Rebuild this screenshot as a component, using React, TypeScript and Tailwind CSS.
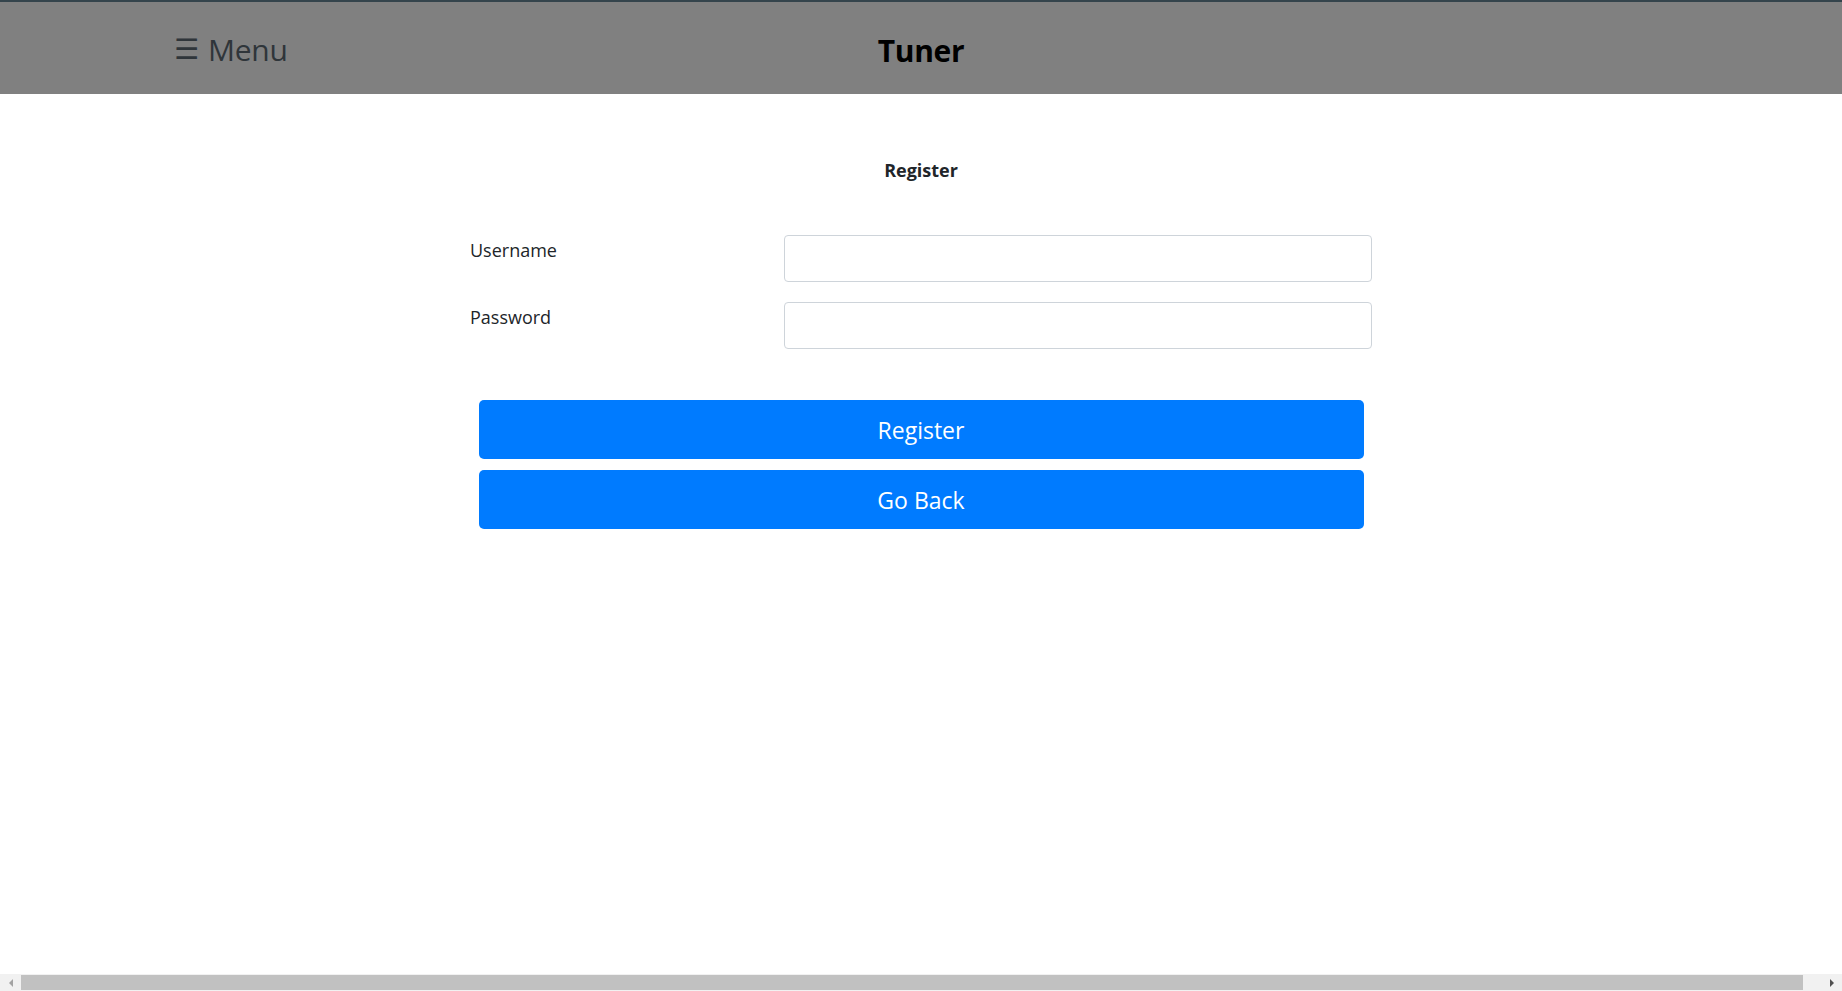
export default function App() {
  return (
    <div className="flex min-h-screen flex-col bg-white font-['Open_Sans',sans-serif] text-[#212529]">
      <header className="flex h-[94px] items-center border-t-2 border-[#34444c] bg-[#808080] px-[174px] pt-[4px]">
        <div className="flex flex-1 items-center gap-[9px] text-[30px] text-[#2f353a]">
          <span className="font-['DejaVu_Sans',sans-serif] text-[28px] leading-none">☰</span>
          <span className="leading-none tracking-[-0.3px]">Menu</span>
        </div>
        <h1 className="text-[30px] font-bold tracking-[-0.3px] text-black">Tuner</h1>
        <div className="flex-1" />
      </header>

      <main className="flex flex-1 flex-col items-center">
        <h2 className="mt-[60px] text-[18px] font-bold leading-[32px]">Register</h2>

        <form className="mt-[49px] w-[902px]">
          <Field label="Username" type="text" />
          <Field label="Password" type="password" />

          <div className="mt-[51px] flex flex-col items-center gap-[11px]">
            <Button>Register</Button>
            <Button>Go Back</Button>
          </div>
        </form>
      </main>

      <Scrollbar />
    </div>
  );
}

function Field({ label, type }: { label: string; type: string }) {
  return (
    <div className="mb-[20px] flex">
      <label className="w-[314px] pt-[1px] text-[18px] leading-[28px]">{label}</label>
      <input type={type} className="h-[47px] flex-1 rounded-[4px] border border-[#ced4da] bg-white px-3 outline-none" />
    </div>
  );
}

function Button({ children }: { children: React.ReactNode }) {
  return (
    <button type="button" className="h-[59px] w-[885px] rounded-[5px] bg-[#007bff] pt-[2px] text-[23px] text-white">
      {children}
    </button>
  );
}

function Scrollbar() {
  return (
    <div className="flex h-[17px] items-center bg-[#f1f1f1]">
      <div className="flex w-[21px] items-center justify-center">
        <svg width="6" height="8" viewBox="0 0 6 8"><path d="M5 0 L1 4 L5 8 Z" fill="#a3a3a3" /></svg>
      </div>
      <div className="h-[15px] flex-1 bg-[#c1c1c1]" />
      <div className="w-[18px]" />
      <div className="flex w-[21px] items-center justify-center">
        <svg width="6" height="8" viewBox="0 0 6 8"><path d="M1 0 L5 4 L1 8 Z" fill="#505050" /></svg>
      </div>
    </div>
  );
}
